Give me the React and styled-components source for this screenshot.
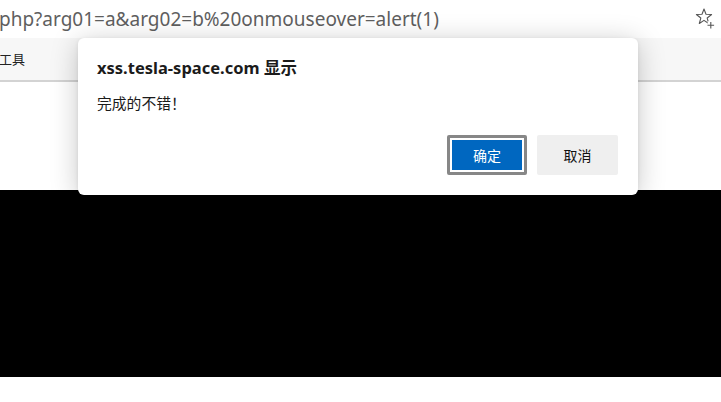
import React from 'react'
import styled, { createGlobalStyle } from 'styled-components'

const GlobalStyle = createGlobalStyle`
  html, body {
    margin: 0;
    padding: 0;
    background: #fff;
    overflow: hidden;
  }
  body {
    font-family: "Noto Sans", "Noto Sans CJK SC", sans-serif;
  }
`

const Page = styled.div`
  position: relative;
  width: 721px;
  height: 402px;
  overflow: hidden;
  background: #fff;
`

const AddressBar = styled.div`
  height: 38px;
  display: flex;
  align-items: center;
  justify-content: space-between;
  background: #fff;
  padding-right: 5px;
  box-sizing: border-box;
`

const Url = styled.span`
  font-family: "Noto Sans", sans-serif;
  font-size: 19px;
  color: #5f5f5f;
  margin-left: -1px;
  white-space: nowrap;
`

const Toolbar = styled.div`
  height: 44px;
  display: flex;
  align-items: center;
  background: #f7f7f7;
  border-bottom: 2px solid #d3d3d3;
  box-sizing: border-box;
  padding-bottom: 2px;
`

const ToolbarItem = styled.span`
  font-family: "Noto Sans CJK SC", sans-serif;
  font-size: 13px;
  color: #222;
  margin-left: -1px;
`

const Spacer = styled.div`
  height: 108px;
`

const BlackBand = styled.div`
  height: 187px;
  background: #000;
`

const Dialog = styled.div`
  position: absolute;
  left: 78px;
  top: 38px;
  width: 560px;
  height: 157px;
  box-sizing: border-box;
  background: #fff;
  border-radius: 6px;
  box-shadow: 0 4px 28px rgba(0, 0, 0, 0.22), 0 1px 4px rgba(0, 0, 0, 0.08);
  padding: 18px 20px 20px 19px;
  display: flex;
  flex-direction: column;
`

const Title = styled.div`
  font-family: "Noto Sans", "Noto Sans CJK SC", sans-serif;
  font-weight: 700;
  font-size: 16.5px;
  line-height: 24px;
  color: #1b1b1b;
`

const Message = styled.div`
  margin-top: 13px;
  font-family: "Noto Sans CJK SC", sans-serif;
  font-size: 14.8px;
  line-height: 20px;
  color: #1b1b1b;
`

const Buttons = styled.div`
  margin-top: auto;
  display: flex;
  justify-content: flex-end;
  gap: 10px;
`

const Button = styled.button`
  width: ${p => (p.primary ? '80px' : '81px')};
  height: 40px;
  box-sizing: border-box;
  font-family: "Noto Sans CJK SC", sans-serif;
  font-size: 14px;
  border-radius: 2px;
  cursor: pointer;
  padding: 0;
  color: ${p => (p.primary ? '#fff' : '#111')};
  background: ${p => (p.primary ? '#0067c0' : '#efefef')};
  border: ${p => (p.primary ? '3px solid #878787' : 'none')};
  box-shadow: ${p => (p.primary ? 'inset 0 0 0 2px #fff' : 'none')};
`

function StarIcon () {
  return (
    <svg width='22' height='22' viewBox='0 0 22 22' fill='none' stroke='#555' strokeWidth='1.1' strokeLinejoin='round'>
      <path d='M10 1 L12 6.25 L17.6 6.5 L13.2 10.05 L14.7 15.5 L10 12.4 L5.3 15.5 L6.8 10.05 L2.4 6.5 L8 6.25 Z' />
      <rect x='13.6' y='13.2' width='6' height='6' fill='#fff' stroke='none' />
      <path d='M16.8 14 V20.6 M13.5 17.3 H20.1' />
    </svg>
  )
}

export default function App () {
  return (
    <Page>
      <GlobalStyle />
      <AddressBar>
        <Url>php?arg01=a&amp;arg02=b%20onmouseover=alert(1)</Url>
        <StarIcon />
      </AddressBar>
      <Toolbar>
        <ToolbarItem>工具</ToolbarItem>
      </Toolbar>
      <Spacer />
      <BlackBand />
      <Dialog>
        <Title>xss.tesla-space.com 显示</Title>
        <Message>完成的不错！</Message>
        <Buttons>
          <Button primary>确定</Button>
          <Button>取消</Button>
        </Buttons>
      </Dialog>
    </Page>
  )
}
